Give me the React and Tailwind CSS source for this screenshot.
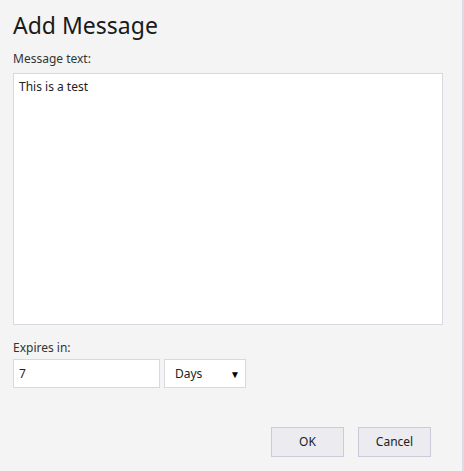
import React, { useState } from 'react';

export default function App() {
  const [text, setText] = useState('This is a test');
  const [amount, setAmount] = useState('7');
  const [unit, setUnit] = useState('Days');

  return (
    <div className="w-[464px] h-[471px] bg-[#f4f4f4] border-r-2 border-[#dcdce6] text-[#222] font-['Segoe_UI','Noto_Sans',sans-serif]">
      <div className="pl-[13px] pr-[19px] pt-[9px]">
        <h1 className="text-[23px] leading-[32px] text-[#1a1a1a]">Add Message</h1>

        <label className="block mt-[10px] text-[12px] leading-[16px] text-[#333]">Message text:</label>
        <textarea
          value={text}
          onChange={(e) => setText(e.target.value)}
          className="block mt-[6px] w-[430px] h-[252px] resize-none bg-white border border-[#d8d8e2] px-[5px] py-[5px] text-[12px] leading-[16px] text-[#222] outline-none"
        />

        <label className="block mt-[15px] text-[12px] leading-[16px] text-[#333]">Expires in:</label>
        <div className="flex gap-[4px] mt-[3px]">
          <input
            value={amount}
            onChange={(e) => setAmount(e.target.value)}
            className="w-[147px] h-[29px] bg-white border border-[#d8d8e2] px-[5px] text-[12px] text-[#222] outline-none"
          />
          <div className="relative w-[82px] h-[29px] bg-white border border-[#d8d8e2]">
            <select
              value={unit}
              onChange={(e) => setUnit(e.target.value)}
              className="appearance-none w-full h-full bg-transparent pl-[10px] text-[12px] text-[#222] outline-none"
            >
              <option>Minutes</option>
              <option>Hours</option>
              <option>Days</option>
            </select>
            <span className="pointer-events-none absolute right-[5px] top-[9px] text-[10px] leading-none text-black">▼</span>
          </div>
        </div>

        <div className="flex justify-end gap-[14px] mt-[39px] pr-[12px]">
          <button className="w-[73px] h-[30px] bg-[#ebebf0] border border-[#cacad8] text-[12px] text-[#222]">OK</button>
          <button className="w-[73px] h-[30px] bg-[#ebebf0] border border-[#cacad8] text-[12px] text-[#222]">Cancel</button>
        </div>
      </div>
    </div>
  );
}
